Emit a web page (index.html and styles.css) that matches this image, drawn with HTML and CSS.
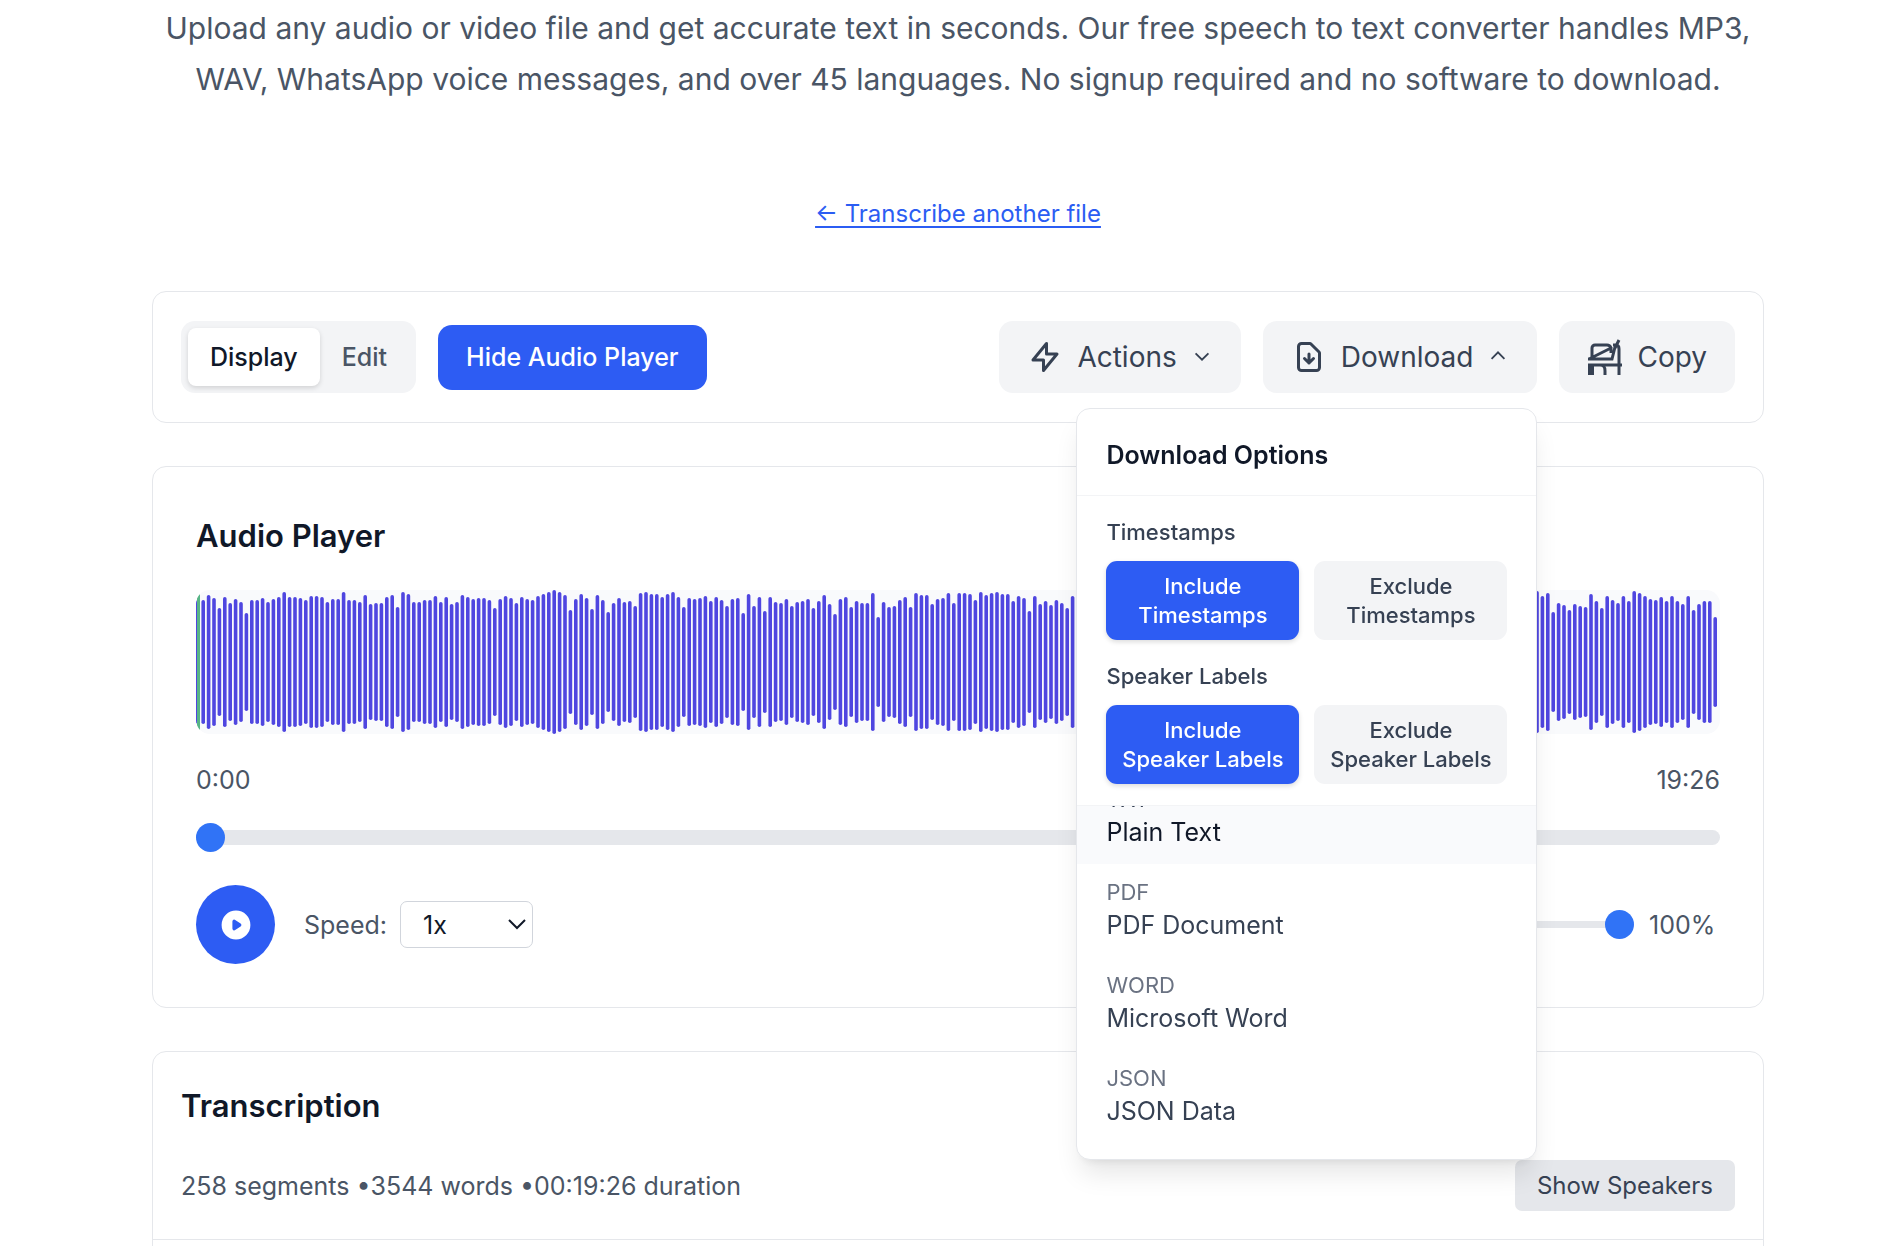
FILE: index.html
```
<!DOCTYPE html>
<html lang="en">
<head>
    <meta charset="UTF-8">
    <meta name="viewport" content="width=device-width, initial-scale=1.0">
    <title>Free Speech to Text Converter</title>
    <link rel="stylesheet" href="styles.css">
</head>
<body>
    <main class="page">
        <p class="intro">Upload any audio or video file and get accurate text in seconds. Our free speech to text converter handles MP3, WAV, WhatsApp voice messages, and over 45 languages. No signup required and no software to download.</p>

        <a class="back-link" href="#">← Transcribe another file</a>

        <section class="card toolbar">
            <div class="mode-toggle">
                <button type="button" class="mode active">Display</button>
                <button type="button" class="mode">Edit</button>
            </div>
            <button type="button" class="btn-primary">Hide Audio Player</button>

            <div class="tools">
                <button type="button" class="tool">
                    <svg class="icon" viewBox="0 0 24 24"><path d="M13 3v7h7l-9 11v-7H4l9-11z"/></svg>
                    Actions
                    <svg class="chevron" viewBox="0 0 24 24"><path d="M5 8l7 7 7-7"/></svg>
                </button>

                <div class="dropdown">
                    <button type="button" class="tool" aria-expanded="true">
                        <svg class="icon" viewBox="0 0 24 24"><path d="M12 10v6M9 13l3 3 3-3M17 21H7a2 2 0 0 1-2-2V5a2 2 0 0 1 2-2h5.600a1 1 0 0 1 .7.3l5.400 5.400a1 1 0 0 1 .3.7V19a2 2 0 0 1-2 2z"/></svg>
                        Download
                        <svg class="chevron" viewBox="0 0 24 24"><path d="M5 14l7-7 7 7"/></svg>
                    </button>

                    <div class="menu">
                        <h3 class="menu-title">Download Options</h3>
                        <div class="menu-options">
                            <p class="option-label">Timestamps</p>
                            <div class="option-row">
                                <button type="button" class="option selected">Include<br>Timestamps</button>
                                <button type="button" class="option">Exclude<br>Timestamps</button>
                            </div>
                            <p class="option-label">Speaker Labels</p>
                            <div class="option-row">
                                <button type="button" class="option selected">Include<br>Speaker Labels</button>
                                <button type="button" class="option">Exclude<br>Speaker Labels</button>
                            </div>
                        </div>
                        <div class="formats" id="formats">
                            <button type="button" class="format hover"><span class="ext">TXT</span>Plain Text</button>
                            <button type="button" class="format"><span class="ext">PDF</span>PDF Document</button>
                            <button type="button" class="format"><span class="ext">WORD</span>Microsoft Word</button>
                            <button type="button" class="format"><span class="ext">JSON</span>JSON Data</button>
                        </div>
                    </div>
                </div>

                <button type="button" class="tool">
                    <svg class="icon-copy" viewBox="0 0 36 36"><path d="M5 19V9a3 3 0 0 1 3-3h12q3 0 4 3M26 6h3q3 0 3 4v26M1 20h24l3-12M2 20 24 9M32 1l-4 8M24 8v6M1 26h34M18 36v-4c0-4-1-6-5-6"/><path class="leg" d="M4 36V26"/></svg>
                    Copy
                </button>
            </div>
        </section>

        <section class="card player">
            <h2 class="card-title">Audio Player</h2>
            <canvas class="waveform" id="waveform"></canvas>
            <div class="times"><span>0:00</span><span>19:26</span></div>
            <input class="seek" type="range" min="0" max="1166" value="0" aria-label="Seek">
            <div class="controls">
                <button type="button" class="play" aria-label="Play">
                    <svg viewBox="0 0 20 20"><path fill-rule="evenodd" d="M10 18a8 8 0 1 0 0-16 8 8 0 0 0 0 16zM9.555 7.168A1 1 0 0 0 8 8v4a1 1 0 0 0 1.555.832l3-2a1 1 0 0 0 0-1.664l-3-2z"/></svg>
                </button>
                <label class="speed-label" for="speed">Speed:</label>
                <div class="select-wrap">
                    <select id="speed">
                        <option>0.5x</option>
                        <option selected>1x</option>
                        <option>1.5x</option>
                        <option>2x</option>
                    </select>
                    <svg class="select-arrow" viewBox="0 0 20 12"><path d="M2 2l8 8 8-8"/></svg>
                </div>
                <div class="volume">
                    <input class="volume-range" type="range" min="0" max="100" value="100" aria-label="Volume">
                    <span class="volume-value">100%</span>
                </div>
            </div>
        </section>

        <section class="card transcript">
            <div class="transcript-head">
                <h2 class="card-title">Transcription</h2>
                <div class="transcript-meta">
                    <span>258 segments •3544 words •00:19:26 duration</span>
                    <button type="button" class="btn-speakers">Show Speakers</button>
                </div>
            </div>
            <div class="transcript-body"></div>
        </section>
    </main>

    <script src="script.js"></script>
</body>
</html>
```

FILE: styles.css
```
* {
    box-sizing: border-box;
}
body {
    margin: 0;
    height: 100vh;
    overflow: hidden;
    background: #fff;
    color: #101828;
    font-family: Inter, "Liberation Sans", sans-serif;
    font-size: 25px;
    line-height: 36px;
}
h2, h3, p {
    margin: 0;
}
button, select {
    font: inherit;
    color: inherit;
    border: none;
    cursor: pointer;
}
svg {
    display: block;
    flex: none;
}
.page {
    display: flex;
    flex-direction: column;
    padding: 3px 122px 0 152px;
}
.intro {
    color: #4a5565;
    font-size: 30px;
    line-height: 51px;
    text-align: center;
}
.back-link {
    align-self: center;
    margin: 91px 0 59px;
    color: #2b5df3;
    font-size: 24px;
    text-decoration-thickness: 2px;
    text-underline-offset: 4px;
}
.card {
    border: 1px solid #e5e7eb;
    border-radius: 14px;
    margin-bottom: 43px;
}
.card-title {
    font-size: 31px;
    font-weight: 600;
    line-height: 51px;
}

/* toolbar */
.toolbar {
    display: flex;
    align-items: center;
    gap: 22px;
    padding: 29px 28px;
}
.mode-toggle {
    display: flex;
    padding: 7px;
    border-radius: 14px;
    background: #f3f4f6;
}
.mode {
    height: 58px;
    padding: 0 22px;
    border-radius: 8px;
    background: none;
    color: #4a5565;
    font-weight: 500;
}
.mode.active {
    background: #fff;
    color: #101828;
    box-shadow: 0 2px 5px rgba(0, 0, 0, 0.14);
}
.btn-primary {
    height: 65px;
    padding: 0 28px;
    border-radius: 14px;
    background: #2d5cf3;
    color: #fff;
    font-weight: 500;
}
.tools {
    display: flex;
    gap: 22px;
    margin-left: auto;
}
.tool {
    display: flex;
    align-items: center;
    height: 72px;
    padding: 0 28px;
    border-radius: 14px;
    background: #f3f4f6;
    color: #364153;
    font-size: 28px;
}
.icon, .icon-copy {
    width: 36px;
    height: 36px;
    margin-right: 14px;
    fill: none;
    stroke: currentColor;
    stroke-width: 2;
    stroke-linecap: round;
    stroke-linejoin: round;
}
.icon-copy {
    stroke-width: 3;
    stroke-linecap: butt;
    stroke-linejoin: miter;
}
.icon-copy .leg {
    stroke-width: 6;
}
.chevron {
    width: 22px;
    height: 22px;
    margin-left: 14px;
    fill: none;
    stroke: currentColor;
    stroke-width: 2;
}

/* download menu */
.dropdown {
    position: relative;
}
.menu {
    position: absolute;
    top: 87px;
    right: 0;
    width: 461px;
    border: 1px solid #e5e7eb;
    border-radius: 14px;
    background: #fff;
    box-shadow: 0 18px 27px -5px rgba(0, 0, 0, 0.1), 0 7px 11px -7px rgba(0, 0, 0, 0.1);
    overflow: hidden;
    z-index: 10;
}
.menu-title {
    padding: 28px 29px 22px;
    border-bottom: 1px solid #f3f4f6;
    font-size: 25px;
    font-weight: 600;
}
.menu-options {
    display: flex;
    flex-direction: column;
    padding: 22px 29px 21px;
    border-bottom: 1px solid #f3f4f6;
    color: #364153;
    font-size: 22px;
    font-weight: 500;
    line-height: 29px;
}
.option-label {
    margin-bottom: 14px;
}
.option-row {
    display: grid;
    grid-template-columns: 1fr 1fr;
    gap: 15px;
}
.option-row + .option-label {
    margin-top: 22px;
}
.option {
    height: 79px;
    padding: 0;
    border-radius: 11px;
    background: #f3f4f6;
}
.option.selected {
    background: #2d5cf3;
    color: #fff;
    box-shadow: 0 2px 5px rgba(0, 0, 0, 0.14);
}
.formats {
    height: 353px;
    padding: 14px 0 16px;
    overflow-y: auto;
    scrollbar-width: none;
}
.format {
    display: block;
    width: 100%;
    padding: 14px 29px;
    background: none;
    color: #364153;
    text-align: left;
}
.ext {
    display: block;
    color: #6a7282;
    font-size: 22px;
    line-height: 29px;
}
.format.hover {
    background: #f9fafc;
    color: #101828;
}
.format.hover .ext {
    color: #364153;
}

/* audio player */
.player {
    padding: 43px;
}
.waveform {
    display: block;
    width: 100%;
    height: 144px;
    margin-top: 29px;
    border-radius: 14px;
    background: #f9fafc;
}
.times {
    display: flex;
    justify-content: space-between;
    margin-top: 28px;
    color: #4a5565;
}
.seek, .volume-range {
    display: block;
    width: 100%;
    height: 15px;
    margin: 32px 0 40px;
    border-radius: 8px;
    background: #e5e7eb;
    appearance: none;
}
.seek::-webkit-slider-thumb, .volume-range::-webkit-slider-thumb {
    appearance: none;
    width: 29px;
    height: 29px;
    border-radius: 50%;
    background: #3073f6;
}
.controls {
    display: flex;
    align-items: center;
    color: #4a5565;
}
.play {
    display: flex;
    align-items: center;
    justify-content: center;
    width: 79px;
    height: 79px;
    padding: 0;
    border-radius: 50%;
    background: #2d5cf3;
}
.play svg {
    width: 36px;
    height: 36px;
    fill: #fff;
}
.speed-label {
    margin: 0 13px 0 29px;
}
.select-wrap {
    position: relative;
}
.select-wrap select {
    display: block;
    width: 133px;
    height: 47px;
    padding: 0 22px;
    border: 1px solid #d1d5dc;
    border-radius: 7px;
    background: #fff;
    color: #101828;
    appearance: none;
}
.select-arrow {
    position: absolute;
    top: 17px;
    right: 6px;
    width: 20px;
    height: 12px;
    fill: none;
    stroke: #101828;
    stroke-width: 2;
    pointer-events: none;
}
.volume {
    display: flex;
    align-items: center;
    gap: 15px;
    margin-left: auto;
}
.volume-range {
    width: 144px;
    height: 7px;
    margin: 0;
}
.volume-value {
    width: 71px;
}

/* transcription */
.transcript-head {
    padding: 28px;
    border-bottom: 1px solid #e5e7eb;
}
.transcript-meta {
    display: flex;
    align-items: center;
    justify-content: space-between;
    margin-top: 29px;
    color: #4a5565;
}
.btn-speakers {
    height: 51px;
    padding: 0 22px;
    border-radius: 7px;
    background: #e5e7eb;
    color: #364153;
    font-size: 24px;
}
.transcript-body {
    min-height: 400px;
}
```

FILE: script.js
```
// gap above (and below) each bar, in px, for a 144px high waveform
const peaks = [
    10,10,5,8,18,7,13,9,12,23,10,10,8,12,9,7,2,7,7,8,10,6,6,7,12,9,9,2,10,10,12,5,14,13,13,7,5,17,2,4,
    12,12,10,10,6,12,7,14,12,5,7,9,8,8,10,18,9,6,8,13,7,9,10,6,4,2,0,2,5,20,9,4,8,19,5,10,22,13,8,12,11,16,3,
    2,4,4,7,4,2,7,17,8,9,8,6,11,7,10,16,9,8,23,4,16,7,21,7,12,13,9,16,12,11,9,18,11,5,14,24,9,7,17,11,
    13,13,3,27,12,17,16,10,7,17,3,5,5,14,9,8,3,13,3,3,4,10,2,5,3,2,4,4,11,6,8,21,6,14,11,15,10,13,18,6,
    12,8,5,9,14,7,10,6,3,8,17,9,12,5,7,11,10,4,6,13,8,9,16,7,5,10,12,8,3,6,9,14,11,7,8,5,19,10,6,9,12,7,4,
    8,13,9,6,10,15,7,5,11,8,9,3,12,6,10,18,7,8,5,13,9,11,6,4,10,7,14,8,12,5,9,6,10,17,8,7,11,4,9,12,6,8,
    1,6,3,22,13,15,20,14,16,17,4,11,18,6,10,13,6,11,1,3,6,9,10,7,11,6,11,14,6,20,14,11,11,27
];
const barWidth = 3.6;
const barGap = 1.8;

const canvas = document.getElementById('waveform');

function drawWaveform() {
    const ctx = canvas.getContext('2d');
    canvas.width = canvas.clientWidth;
    canvas.height = canvas.clientHeight;

    ctx.fillStyle = '#4f46e0';
    peaks.forEach((gap, i) => {
        ctx.beginPath();
        ctx.roundRect(i * (barWidth + barGap), gap, barWidth, canvas.height - gap * 2, 2);
        ctx.fill();
    });

    // playback cursor
    ctx.fillStyle = '#57b586';
    ctx.fillRect(1, 0, 3, canvas.height);
}

drawWaveform();
window.addEventListener('resize', drawWaveform);

const formats = document.getElementById('formats');
formats.scrollTop = formats.scrollHeight;
```
